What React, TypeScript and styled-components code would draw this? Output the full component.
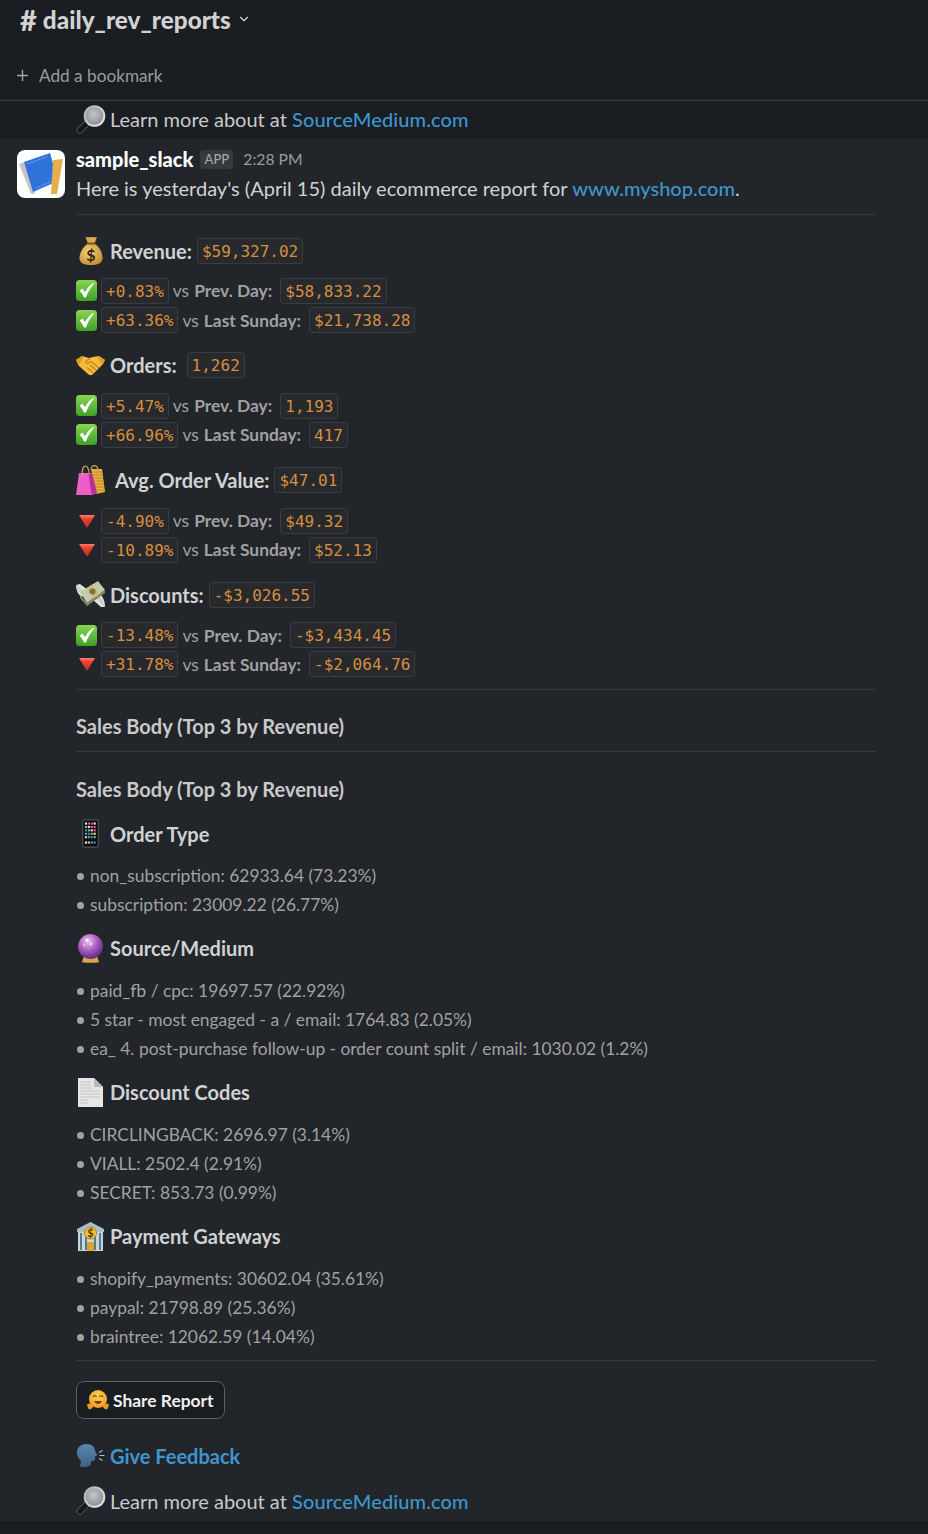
import React from "react";
import styled, { createGlobalStyle } from "styled-components";
import { ChevronDown } from "lucide-react";

const Global = createGlobalStyle`
  html, body { margin: 0; padding: 0; background: #222529; }
  body { font-family: Lato, "Noto Sans", sans-serif; color: #d1d2d3; font-size: 18px; }
`;

const Page = styled.div`
  width: 928px;
  height: 1534px;
  overflow: hidden;
  display: flex;
  flex-direction: column;
  background: #1a1d21;
`;
const Header = styled.header`
  height: 100px;
  display: flex;
  flex-direction: column;
  border-bottom: 1px solid #3b3d41;
  box-sizing: content-box;
`;
const TitleRow = styled.div`
  height: 39px;
  padding-left: 20px;
  display: flex;
  align-items: center;
  gap: 6px;
  color: #d1d2d3;
  font-size: 24.3px;
  font-weight: 900;
  svg { margin-left: 0; margin-top: -1px; }
`;
const Hash = styled.span`
  font-size: 29px;
  line-height: 24px;
`;
const BookmarkRow = styled.div`
  margin-top: 24px;
  padding-left: 17px;
  height: 24px;
  display: flex;
  align-items: center;
  gap: 11px;
  color: #9b9c9e;
  font-size: 17.2px;
`;
const Banner = styled.div`
  height: 38px;
  padding-left: 76px;
  padding-bottom: 2px;
  box-sizing: border-box;
  display: flex;
  align-items: center;
  gap: 4px;
  font-size: 20px;
  color: #c9cacb;
`;
const Link = styled.a<{ $bold?: boolean }>`
  color: #3d96cc;
  font-weight: ${(p) => (p.$bold ? 700 : 500)};
  text-decoration: none;
`;
const SiteLink = styled(Link)`
  letter-spacing: 0.12px;
`;
const Message = styled.main`
  height: 1382px;
  background: #222529;
  padding: 0 52px 0 17px;
  display: flex;
  gap: 11px;
`;
const Avatar = styled.div`
  width: 48px;
  height: 48px;
  margin-top: 11px;
  border-radius: 8px;
  background: #fff;
  flex: none;
  overflow: hidden;
`;
const Body = styled.div`
  flex: 1;
  min-width: 0;
  display: flex;
  flex-direction: column;
`;
const MetaRow = styled.div`
  height: 24px;
  margin-top: 8px;
  display: flex;
  align-items: center;
`;
const Sender = styled.span`
  color: #fff;
  font-weight: 900;
  font-size: 20px;
`;
const AppTag = styled.span`
  margin-left: 7px;
  width: 33px;
  height: 19px;
  border-radius: 3px;
  background: #38393d;
  color: #a5a6a8;
  font-size: 13px;
  font-weight: 500;
  display: flex;
  align-items: center;
  justify-content: center;
`;
const Time = styled.span`
  margin-left: 10px;
  color: #9b9c9e;
  font-size: 15.7px;
`;
const Intro = styled.div`
  height: 29px;
  margin-top: 3px;
  line-height: 29px;
  font-size: 20px;
  color: #d1d2d3;
`;
const Rule = styled.hr<{ $mt: number; $mb: number }>`
  width: 100%;
  margin: ${(p) => p.$mt}px 0 ${(p) => p.$mb}px;
  border: 0;
  height: 1px;
  background: #38393d;
  flex: none;
`;
const Heading = styled.div<{ $gap?: number; $mb?: number }>`
  height: 29px;
  display: flex;
  align-items: center;
  gap: ${(p) => p.$gap ?? 5}px;
  font-size: 20px;
  font-weight: 700;
  color: #d1d2d3;
  margin-bottom: ${(p) => p.$mb ?? 11.4}px;
`;
const WideLabel = styled.span`
  margin-left: 5px;
`;
const Stat = styled.div`
  height: 29.2px;
  display: flex;
  align-items: center;
  font-size: 17.4px;
  color: #a0a1a3;
`;
const Group = styled.section<{ $last?: boolean }>`
  margin-bottom: ${(p) => (p.$last ? 0 : 16)}px;
`;
const Flag = styled.span`
  width: 21px;
  height: 22px;
  margin-right: 4px;
  display: flex;
  align-items: center;
  justify-content: center;
  flex: none;
`;
const HeadIcon = styled.span<{ $mr?: number }>`
  width: 29px;
  height: 29px;
  margin-right: ${(p) => p.$mr ?? 5}px;
  display: flex;
  align-items: center;
  justify-content: center;
  flex: none;
`;
const Chip = styled.code<{ $ml?: number }>`
  display: inline-block;
  height: 26px;
  box-sizing: border-box;
  padding: 0 4px;
  line-height: 26px;
  margin-left: ${(p) => p.$ml ?? 0}px;
  border: 1px solid #3a3c40;
  border-radius: 3px;
  background: #27292d;
  color: #d68f3f;
  font-family: "DejaVu Sans Mono", "Liberation Mono", monospace;
  font-size: 16px;
  font-weight: 400;
  white-space: nowrap;
`;
const Versus = styled.span`
  margin-left: 4px;
`;
const Strong = styled.b`
  margin-left: 5px;
  font-weight: 700;
  margin-right: 8px;
`;
const Subhead = styled.div`
  height: 29px;
  line-height: 29px;
  font-size: 20px;
  font-weight: 700;
  color: #c8c9ca;
`;
const Spacer = styled.div`
  height: 15px;
  flex: none;
`;
const List = styled.ul<{ $last?: boolean }>`
  list-style: none;
  margin: 0 0 ${(p) => (p.$last ? 0 : 14.6)}px;
  padding: 0;
`;
const Item = styled.li`
  height: 29.2px;
  line-height: 29.2px;
  font-size: 17.4px;
  color: #a0a1a3;
  &::before {
    content: "";
    display: inline-block;
    width: 7px;
    height: 7px;
    margin: 0 6px 2px 1px;
    border-radius: 50%;
    background: #a0a1a3;
  }
`;
const ShareButton = styled.button`
  align-self: flex-start;
  width: 149px;
  height: 38px;
  flex: none;
  border: 1px solid #5e6063;
  border-radius: 8px;
  background: #1a1d21;
  color: #f0f0f0;
  font-family: inherit;
  font-size: 17.4px;
  font-weight: 700;
  display: flex;
  align-items: center;
  gap: 4px;
  padding: 0 0 0 10px;
`;
const LinkHeading = styled.div`
  height: 29px;
  margin-top: 22px;
  display: flex;
  align-items: center;
  gap: 5px;
  font-size: 20px;
`;
const Footer = styled.div`
  height: 29px;
  margin-top: 16px;
  display: flex;
  align-items: center;
  gap: 4px;
  font-size: 20px;
  color: #c9cacb;
`;

const Check = () => (
  <svg width="21" height="21" viewBox="0 0 21 21">
    <defs>
      <linearGradient id="gr" x1="0" y1="0" x2="0" y2="1">
        <stop offset="0" stopColor="#86d651" />
        <stop offset="1" stopColor="#3f9f28" />
      </linearGradient>
    </defs>
    <rect width="21" height="21" rx="3.5" fill="url(#gr)" />
    <path d="M3.6 10.8 L6.4 8.600 L9 12 C11 8.500 13.500 5.500 17.400 2.800 L18 3.500 C14.500 7.600 12 12 10 17.600 H8 C7 15 5.500 12.800 3.600 10.800 Z" fill="#fff" />
  </svg>
);
const Down = () => (
  <svg width="16" height="14" viewBox="0 0 16 14">
    <defs>
      <linearGradient id="rd" x1="0" y1="0" x2="0" y2="1">
        <stop offset="0" stopColor="#f8806c" />
        <stop offset=".3" stopColor="#e8442f" />
        <stop offset="1" stopColor="#c92a1c" />
      </linearGradient>
    </defs>
    <path d="M1 1 H15 C15.600 1 15.800 1.500 15.500 2 L8.600 13 C8.300 13.400 7.700 13.400 7.400 13 L0.500 2 C0.200 1.500 0.400 1 1 1 Z" fill="url(#rd)" />
  </svg>
);
const Bag = () => (
  <svg width="24" height="29" viewBox="0 0 24 29">
    <defs>
      <radialGradient id="bg" cx=".4" cy=".4" r=".8">
        <stop offset="0" stopColor="#f2d37c" />
        <stop offset="1" stopColor="#b87f27" />
      </radialGradient>
    </defs>
    <path d="M6.500 1 C9 2 10 0.500 12 1 C14 0.500 16 2 18 1 L15.500 7.500 H9 Z" fill="#d8a94e" />
    <path d="M9 7.500 H15.500 C21 11 24 18 23.500 23 C23 27.500 18 29 12 29 C6 29 1 27.500 0.500 23 C0 18 3.500 11 9 7.500 Z" fill="url(#bg)" />
    <rect x="8" y="6.500" width="8.500" height="2" rx="1" fill="#7a5316" />
    <text x="12" y="25" textAnchor="middle" fontSize="16" fontWeight="700" fontFamily="Lato" fill="#33260f">$</text>
  </svg>
);
const Handshake = () => (
  <svg width="29" height="22" viewBox="0 0 29 22">
    <path d="M0 6 L6 2 L13 4 L17 3 L23 2 L29 6 L26 11 L17 20 C15 22 13 21 12 20 L3 12 Z" fill="#f5bb40" />
    <path d="M14 4 L9.500 8 C11 10 13 9 15 7.500 L23 14 M20 16 L14 11 M17 18.500 L11 13.500" fill="none" stroke="#bd8119" strokeWidth="1.100" />
    <path d="M0 6 L6 2 L8 3 L2.500 11.500 Z M29 6 L23 2 L21 3 L26.500 11 Z" fill="#e09d26" />
  </svg>
);
const Bags = () => (
  <svg width="29" height="30" viewBox="0 0 29 30">
    <path d="M15 4 H26 L29 27 L20 29 Z" fill="#e3b23e" />
    <path d="M17 7 H26 M17 10 H27 M17 13 H27 M17 16 H28 M18 19 H28 M18 22 H28 M19 25 H29" stroke="#c58b22" strokeWidth="1" />
    <path d="M3 8 H16 L21 28 L16 30 H0 Z" fill="#ec5fc6" />
    <path d="M12.500 9 L15.500 29.500 L21 28 L16 8 Z" fill="#b92f96" />
    <path d="M6.500 11 C5 -2 13 -2 13 9 M15 5 C15 -1 22 -1 22 6" fill="none" stroke="#c9a65a" strokeWidth="1.200" />
  </svg>
);
const Flying = () => (
  <svg width="29" height="27" viewBox="0 0 29 27">
    <path d="M0 4 L4 3 L12 9 L6 16 C2 14 0 9 0 4 Z" fill="#dfe1dc" />
    <path d="M0 4 C2 7 5 9 8 11 M1 8 C3 10 5 12 7 13" stroke="#a9aca5" strokeWidth=".8" fill="none" />
    <path d="M29 26 L25 26 L17 19 L22 11 C27 15 29 20 29 26 Z" fill="#dfe1dc" />
    <path d="M29 26 C26 22 24 19 21 17 M27 21 C25 19 24 18 22 15" stroke="#a9aca5" strokeWidth=".8" fill="none" />
    <path d="M4 11 L22 0 L29 9 L11 22 Z" fill="#c4cbaa" />
    <path d="M4 14 L11 22 L29 9 L29 12 L11 25 L4 17 Z" fill="#7f8a66" />
    <path d="M11 7 L16 3.500 L23 13 L18 17 Z" fill="#dcb766" />
    <circle cx="16.500" cy="10.500" r="3" fill="#6b7752" />
  </svg>
);
const Phone = () => {
  const colors = ["#e8e8e8", "#4ab0d8", "#e55", "#7c5", "#fc5", "#ea5cc4", "#48d", "#eee"];
  const cells = [];
  for (let r = 0; r < 6; r++)
    for (let c = 0; c < 4; c++)
      cells.push(
        <rect key={`${r}${c}`} x={2.9 + c * 2.9} y={3.5 + r * 3.4 + (r === 5 ? 2 : 0)} width="2.100" height="2.100" fill={colors[(r * 3 + c * 5) % 8]} />
      );
  return (
    <svg width="17" height="29" viewBox="0 0 17 29">
      <rect width="17" height="29" rx="3" fill="#44474c" />
      <rect x="1.400" y="1.400" width="14.200" height="26.200" rx="1.500" fill="#0d0d0f" />
      {cells}
    </svg>
  );
};
const Ball = () => (
  <svg width="25" height="29" viewBox="0 0 25 29">
    <defs>
      <radialGradient id="bl" cx=".4" cy=".3" r=".8">
        <stop offset="0" stopColor="#f0c9f4" />
        <stop offset=".45" stopColor="#a85fc0" />
        <stop offset="1" stopColor="#4d1c6d" />
      </radialGradient>
    </defs>
    <path d="M6 22 H19 L21 28 C21 29 4 29 4 28 Z" fill="#d8a548" />
    <circle cx="12.500" cy="12.500" r="12.500" fill="url(#bl)" />
    <circle cx="9" cy="6" r="1.500" fill="#fff" />
    <circle cx="13" cy="10" r="1" fill="#fff" />
    <circle cx="6" cy="11" r=".8" fill="#fff" />
  </svg>
);
const Doc = () => (
  <svg width="25" height="29" viewBox="0 0 25 29">
    <path d="M0 0 H16 L25 9 V29 H0 Z" fill="#e6e6e6" />
    <path d="M16 0 L25 9 H17 C16 9 16 8 16 7 Z" fill="#b9b9b9" />
    <path d="M2 4 H13 M2 7 H13 M2 10 H14 M2 13 H22 M2 16 H22 M2 19 H22 M2 22 H10 M2 25 H10" stroke="#c4c4c4" strokeWidth="1" />
  </svg>
);
const Bank = () => (
  <svg width="29" height="29" viewBox="0 0 29 29">
    <path d="M14.500 0 L28 7 V10 H1 V7 Z" fill="#a9c0c9" />
    <path d="M2 10 H27 V29 H2 Z" fill="#c4d6de" />
    <path d="M5 11 V28 M10 11 V28 M19 11 V28 M24 11 V28" stroke="#5e7885" strokeWidth="2" />
    <rect x="11" y="20" width="7" height="9" fill="#d9a436" />
    <circle cx="14.500" cy="11" r="6" fill="#f2c23d" stroke="#b98518" />
    <text x="14.500" y="15" textAnchor="middle" fontSize="11" fontWeight="700" fontFamily="Lato" fill="#5a3d0a">$</text>
  </svg>
);
const Hug = () => (
  <svg width="22" height="20" viewBox="0 0 22 20">
    <defs>
      <radialGradient id="hg" cx=".5" cy=".35" r=".7">
        <stop offset="0" stopColor="#fcd04f" />
        <stop offset="1" stopColor="#f09a25" />
      </radialGradient>
    </defs>
    <circle cx="11" cy="9" r="9" fill="url(#hg)" />
    <path d="M6 7 C7 5 8.500 5 9.500 7 M12.500 7 C13.500 5 15 5 16 7" fill="none" stroke="#6b3d0c" strokeWidth="1.200" />
    <path d="M7 11 C9 15 13 15 15 11 Z" fill="#7a3b0d" />
    <path d="M0 15 C1 13 4 13 6 15 C7 18 3 20 1.500 19 Z M22 15 C21 13 18 13 16 15 C15 18 19 20 20.500 19 Z" fill="#ee9722" />
  </svg>
);
const Speaking = () => (
  <svg width="29" height="24" viewBox="0 0 29 24">
    <defs>
      <linearGradient id="sp" x1="0" y1="0" x2="0" y2="1">
        <stop offset="0" stopColor="#5a87ad" />
        <stop offset="1" stopColor="#3d6283" />
      </linearGradient>
    </defs>
    <path d="M1 10 C0 4 5 0 10 0 C16 0 19 3 19 7 L21 10.500 C21 12 19 12 19 12.500 L19 15 C19 17 17 17 15 17 L15 20 C13 24 5 24 4 22 L5 17 C3 15 1.500 13 1 10 Z" fill="url(#sp)" />
    <path d="M23 8.500 L26.500 6.500 M23.500 11.500 H28.500 M23 14.500 L26.500 16.500" stroke="#aebfcc" strokeWidth="1.100" />
  </svg>
);
const Magnifier = () => (
  <svg width="30" height="29" viewBox="0 0 30 29">
    <defs>
      <radialGradient id="lens" cx=".45" cy=".4" r=".7">
        <stop offset="0" stopColor="#c4c7ca" />
        <stop offset="1" stopColor="#85898d" />
      </radialGradient>
      <linearGradient id="rim" x1="0" y1="0" x2="1" y2="1">
        <stop offset="0" stopColor="#a8abae" />
        <stop offset="1" stopColor="#eceeef" />
      </linearGradient>
    </defs>
    <path d="M1.200 24 L9 16 L10.500 14.500 L14.500 19 L12.500 20.500 L5.500 28 C3.500 29.500 0 26.500 1.200 24 Z" fill="#17181a" stroke="#6a6e71" strokeWidth=".8" />
    <circle cx="18.500" cy="11" r="10.800" fill="url(#rim)" />
    <circle cx="18.500" cy="11" r="8.800" fill="url(#lens)" />
  </svg>
);
const BookAvatar = () => (
  <svg width="48" height="48" viewBox="0 0 48 48">
    <path d="M2 14 L7 12 L18 44 L14 44 Z" fill="#c4c5c8" />
    <path d="M7 12 L33 3 L41 31 L16 42 Z" fill="#2f72d8" />
    <path d="M10 14 L31 6.500 M36 24 L38 30 L18 38.500" fill="none" stroke="#a8c6f0" strokeWidth=".7" strokeDasharray="1.500 1" />
    <path d="M36 10 L46 9 L40 44 L34 44 Z" fill="#e4b04d" />
  </svg>
);

type StatRow = { flag: "ok" | "bad"; pct: string; label: string; val: string };
const Metric = ({ rows }: { rows: StatRow[] }) => (
  <>
    {rows.map((r) => (
      <Stat key={r.label}>
        <Flag>{r.flag === "ok" ? <Check /> : <Down />}</Flag>
        <Chip>{r.pct}</Chip>
        <Versus>vs</Versus>
        <Strong>{r.label}</Strong>
        <Chip>{r.val}</Chip>
      </Stat>
    ))}
  </>
);

const Bullets = ({ items, last }: { items: string[]; last?: boolean }) => (
  <List $last={last}>
    {items.map((i) => (
      <Item key={i}>{i}</Item>
    ))}
  </List>
);

export default function App() {
  return (
    <Page>
      <Global />
      <Header>
        <TitleRow>
          <Hash>#</Hash>
          <span>daily_rev_reports</span>
          <ChevronDown size={14} strokeWidth={2} />
        </TitleRow>
        <BookmarkRow>
          <svg width="11" height="11" viewBox="0 0 11 11">
            <path d="M5.500 0 V11 M0 5.500 H11" stroke="#a5a6a8" strokeWidth="1.400" />
          </svg>
          Add a bookmark
        </BookmarkRow>
      </Header>
      <Banner>
        <Magnifier />
        <span>
          Learn more about at <SiteLink href="#">SourceMedium.com</SiteLink>
        </span>
      </Banner>
      <Message>
        <Avatar>
          <BookAvatar />
        </Avatar>
        <Body>
          <MetaRow>
            <Sender>sample_slack</Sender>
            <AppTag>APP</AppTag>
            <Time>2:28 PM</Time>
          </MetaRow>
          <Intro>
            Here is yesterday's (April 15) daily ecommerce report for <Link href="#">www.myshop.com</Link>.
          </Intro>
          <Rule $mt={11} $mb={21} />
          <Group>
            <Heading>
              <HeadIcon $mr={0}>
                <Bag />
              </HeadIcon>
              Revenue:
              <Chip>$59,327.02</Chip>
            </Heading>
            <Metric
              rows={[
                { flag: "ok", pct: "+0.83%", label: "Prev. Day:", val: "$58,833.22" },
                { flag: "ok", pct: "+63.36%", label: "Last Sunday:", val: "$21,738.28" },
              ]}
            />
          </Group>
          <Group>
            <Heading>
              <Handshake />
              Orders:
              <Chip $ml={5}>1,262</Chip>
            </Heading>
            <Metric
              rows={[
                { flag: "ok", pct: "+5.47%", label: "Prev. Day:", val: "1,193" },
                { flag: "ok", pct: "+66.96%", label: "Last Sunday:", val: "417" },
              ]}
            />
          </Group>
          <Group>
            <Heading>
              <Bags />
              <WideLabel>Avg. Order Value:</WideLabel>
              <Chip>$47.01</Chip>
            </Heading>
            <Metric
              rows={[
                { flag: "bad", pct: "-4.90%", label: "Prev. Day:", val: "$49.32" },
                { flag: "bad", pct: "-10.89%", label: "Last Sunday:", val: "$52.13" },
              ]}
            />
          </Group>
          <Group $last>
            <Heading>
              <Flying />
              Discounts:
              <Chip>-$3,026.55</Chip>
            </Heading>
            <Metric
              rows={[
                { flag: "ok", pct: "-13.48%", label: "Prev. Day:", val: "-$3,434.45" },
                { flag: "bad", pct: "+31.78%", label: "Last Sunday:", val: "-$2,064.76" },
              ]}
            />
          </Group>
          <Rule $mt={10} $mb={22} />
          <Subhead>Sales Body (Top 3 by Revenue)</Subhead>
          <Rule $mt={10} $mb={23} />
          <Subhead>Sales Body (Top 3 by Revenue)</Subhead>
          <Spacer />
          <Heading $gap={0} $mb={12.8}>
            <HeadIcon>
              <Phone />
            </HeadIcon>
            Order Type
          </Heading>
          <Bullets items={["non_subscription: 62933.64 (73.23%)", "subscription: 23009.22 (26.77%)"]} />
          <Heading $gap={0} $mb={12.8}>
            <HeadIcon>
              <Ball />
            </HeadIcon>
            Source/Medium
          </Heading>
          <Bullets
            items={[
              "paid_fb / cpc: 19697.57 (22.92%)",
              "5 star - most engaged - a / email: 1764.83 (2.05%)",
              "ea_ 4. post-purchase follow-up - order count split / email: 1030.02 (1.2%)",
            ]}
          />
          <Heading $gap={0} $mb={12.8}>
            <HeadIcon>
              <Doc />
            </HeadIcon>
            Discount Codes
          </Heading>
          <Bullets items={["CIRCLINGBACK: 2696.97 (3.14%)", "VIALL: 2502.4 (2.91%)", "SECRET: 853.73 (0.99%)"]} />
          <Heading $gap={0} $mb={12.8}>
            <HeadIcon>
              <Bank />
            </HeadIcon>
            Payment Gateways
          </Heading>
          <Bullets
            last
            items={["shopify_payments: 30602.04 (35.61%)", "paypal: 21798.89 (25.36%)", "braintree: 12062.59 (14.04%)"]}
          />
          <Rule $mt={9} $mb={20} />
          <ShareButton>
            <Hug />
            Share Report
          </ShareButton>
          <LinkHeading>
            <Speaking />
            <Link href="#" $bold>
              Give Feedback
            </Link>
          </LinkHeading>
          <Footer>
            <Magnifier />
            <span>
              Learn more about at <SiteLink href="#">SourceMedium.com</SiteLink>
            </span>
          </Footer>
        </Body>
      </Message>
    </Page>
  );
}
